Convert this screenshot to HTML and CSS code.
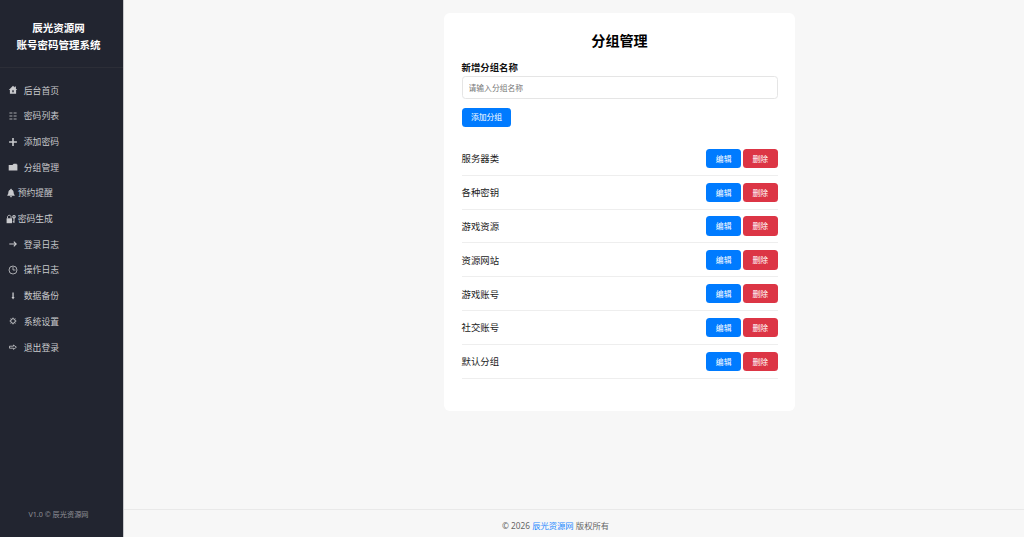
FILE: index.html
```html
<!DOCTYPE html>
<html lang="zh-CN">
<head>
  <meta charset="UTF-8">
  <meta name="viewport" content="width=device-width, initial-scale=1.0">
  <title>分组管理</title>
  <link rel="stylesheet" href="styles.css">
</head>
<body>
  <div class="sidebar">
    <div class="logo">辰光资源网<br>账号密码管理系统</div>
    <ul class="menu">
      <li><a href="#"><svg class="icon" viewBox="0 0 10 10"><path d="M5 .8L.8 5h1.1v3.8h6.2V5h1.1L7.9 3.7V1.5H6.7v1zM4.3 5.2h1.4v2H4.3z" fill="currentColor" fill-rule="evenodd"/></svg>后台首页</a></li>
      <li><a href="#"><svg class="icon" viewBox="0 0 10 10"><path d="M1.4 2h3M5.6 2h3M1.4 5h3M5.6 5h3M1.4 8h3M5.6 8h3" stroke="currentColor" stroke-width=".8"/></svg>密码列表</a></li>
      <li><a href="#"><svg class="icon" viewBox="0 0 10 10"><path d="M5 1.1v7.8M1.1 5h7.8" stroke="currentColor" stroke-width="1.6"/></svg>添加密码</a></li>
      <li><a href="#"><svg class="icon" viewBox="0 0 10 10"><path d="M.7 3h3.8l1.2-1.3h3v.9h.7v6H.7z" fill="currentColor"/></svg>分组管理</a></li>
      <li><a href="#" class="tight"><svg class="icon" viewBox="0 0 10 10"><path d="M5 .8c.6 0 .8.4.8.9C7.4 2.1 7.6 3.6 7.7 5c.1 1.1.6 1.6 1 2.2v.5H1.3v-.5c.4-.6.9-1.1 1-2.2.1-1.4.3-2.9 1.9-3.3 0-.5.2-.9.8-.9zM3.9 8.2h2.2c0 1.4-2.2 1.4-2.2 0z" fill="currentColor"/></svg>预约提醒</a></li>
      <li><a href="#" class="tight"><svg class="icon" viewBox="0 0 10 10"><path d="M.6 4.3h5.4v4.9H.6z" fill="currentColor"/><path d="M1.5 4.5V2.9c0-2.1 3.5-2.1 3.5 0v1.6" fill="none" stroke="currentColor" stroke-width=".9"/><path d="M8 4v4.8M8 7.8h-1.3" stroke="currentColor" stroke-width="1"/><circle cx="8" cy="2.7" r="1.2" fill="none" stroke="currentColor" stroke-width="1.2"/></svg>密码生成</a></li>
      <li><a href="#"><svg class="icon" viewBox="0 0 10 10"><path d="M1.3 5h7M5.8 2.6L8.2 5 5.8 7.4" fill="none" stroke="currentColor" stroke-width="1.1"/></svg>登录日志</a></li>
      <li><a href="#"><svg class="icon" viewBox="0 0 10 10"><circle cx="5" cy="5" r="4" fill="none" stroke="currentColor" stroke-width=".8"/><path d="M5 1.8V5h2.5" fill="none" stroke="currentColor" stroke-width=".8"/></svg>操作日志</a></li>
      <li><a href="#"><svg class="icon" viewBox="0 0 10 10"><path d="M4.4 1.5h1.3v4.6h.9L5.05 8.5 3.5 6.1h.9z" fill="currentColor"/></svg>数据备份</a></li>
      <li><a href="#"><svg class="icon" viewBox="0 0 10 10"><circle cx="5" cy="5" r="2.3" fill="none" stroke="currentColor" stroke-width="1"/><path d="M5 1.6v1M5 7.4v1M1.6 5h1M7.4 5h1M2.6 2.6l.7.7M6.7 6.7l.7.7M2.6 7.4l.7-.7M6.7 3.3l.7-.7" stroke="currentColor" stroke-width=".8"/></svg>系统设置</a></li>
      <li><a href="#"><svg class="icon" viewBox="0 0 10 10"><path d="M1.5 4.2h4V3l2.9 2.2-2.9 2.2V6.2h-4z" fill="none" stroke="currentColor" stroke-width=".8"/></svg>退出登录</a></li>
    </ul>
    <div class="version">V1.0 © 辰光资源网</div>
  </div>

  <div class="main">
    <div class="container">
      <h2>分组管理</h2>
      <form>
        <label for="group_name">新增分组名称</label>
        <input type="text" id="group_name" name="group_name" placeholder="请输入分组名称" required>
        <button type="submit" class="btn">添加分组</button>
      </form>
      <ul class="group-list">
        <li><span>服务器类</span><div class="actions"><a href="#" class="btn">编辑</a><a href="#" class="btn btn-danger">删除</a></div></li>
        <li><span>各种密钥</span><div class="actions"><a href="#" class="btn">编辑</a><a href="#" class="btn btn-danger">删除</a></div></li>
        <li><span>游戏资源</span><div class="actions"><a href="#" class="btn">编辑</a><a href="#" class="btn btn-danger">删除</a></div></li>
        <li><span>资源网站</span><div class="actions"><a href="#" class="btn">编辑</a><a href="#" class="btn btn-danger">删除</a></div></li>
        <li><span>游戏账号</span><div class="actions"><a href="#" class="btn">编辑</a><a href="#" class="btn btn-danger">删除</a></div></li>
        <li><span>社交账号</span><div class="actions"><a href="#" class="btn">编辑</a><a href="#" class="btn btn-danger">删除</a></div></li>
        <li><span>默认分组</span><div class="actions"><a href="#" class="btn">编辑</a><a href="#" class="btn btn-danger">删除</a></div></li>
      </ul>
    </div>
    <div class="footer">© 2026 <a href="#">辰光资源网</a> 版权所有</div>
  </div>
</body>
</html>
```
FILE: styles.css
```css
* {
  box-sizing: border-box;
  margin: 0;
  padding: 0;
}

body {
  display: flex;
  height: 100vh;
  overflow: hidden;
  background: #f7f7f7;
  color: #222;
  font-family: "Noto Sans", "Noto Sans CJK SC", sans-serif;
}

a {
  text-decoration: none;
}

ul {
  list-style: none;
}

.sidebar {
  display: flex;
  flex-direction: column;
  width: 124px;
  background: #222530;
  border-right: 1px solid #c8c9cc;
}

.logo {
  height: 68px;
  padding: 20px 6px 0 0;
  border-bottom: 1px solid #2c2e37;
  color: #fff;
  font-size: 10.5px;
  font-weight: bold;
  line-height: 17px;
  text-align: center;
}

.menu {
  flex: 1;
  padding-top: 9.3px;
}

.menu a {
  display: flex;
  align-items: center;
  height: 25.7px;
  padding-left: 7.5px;
  color: #c9cacd;
  font-size: 8.8px;
}

.menu .icon {
  width: 10px;
  height: 10px;
  margin-right: 6.3px;
}

.menu .tight {
  padding-left: 6px;
}

.menu .tight .icon {
  margin-right: 1.7px;
}

.version {
  height: 32px;
  padding-right: 6px;
  color: #8f9096;
  font-size: 7.2px;
  line-height: 18px;
  text-align: center;
}

.main {
  display: flex;
  flex: 1;
  flex-direction: column;
  align-items: center;
  justify-content: space-between;
  padding-top: 13px;
}

.container {
  width: 351px;
  height: 398px;
  margin-left: 91px;
  padding: 17.5px;
  background: #fff;
  border-radius: 6px;
}

.container h2 {
  color: #000;
  font-size: 14.1px;
  line-height: 20px;
  text-align: center;
}

label {
  display: block;
  margin-top: 8.5px;
  color: #111;
  font-size: 9.4px;
  font-weight: bold;
  line-height: 17px;
}

input {
  display: block;
  width: 100%;
  height: 23px;
  margin: 0 0 9px;
  padding: 0 6px;
  border: 1px solid #e5e5e5;
  border-radius: 3.5px;
  font-family: inherit;
  font-size: 7.8px;
}

input::placeholder {
  color: #777;
}

.btn {
  display: inline-block;
  height: 19.4px;
  padding: 0 9.4px;
  background: #007bff;
  border: none;
  border-radius: 3.5px;
  color: #fff;
  font-family: inherit;
  font-size: 7.8px;
  line-height: 19.4px;
  vertical-align: top;
}

.btn-danger {
  background: #dc3545;
}

.group-list {
  margin-top: 12px;
}

.group-list li {
  display: flex;
  align-items: center;
  justify-content: space-between;
  height: 33.82px;
  border-bottom: 1px solid #eee;
  font-size: 9.4px;
}

.actions {
  display: flex;
  gap: 2.3px;
}

.actions .btn {
  line-height: 20.4px;
}

.footer {
  width: 100%;
  height: 28px;
  padding-right: 37px;
  border-top: 1px solid #e9e9e9;
  color: #666;
  font-size: 8.3px;
  line-height: 32px;
  text-align: center;
}

.footer a {
  color: #1e88ff;
}
```
